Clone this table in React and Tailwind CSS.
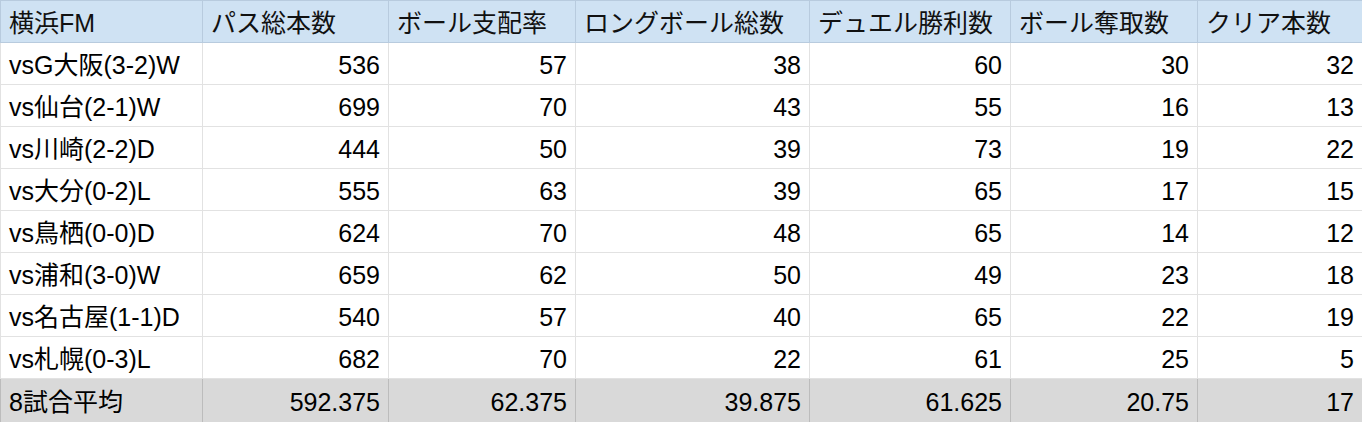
import React from 'react';

const headers = ['横浜FM', 'パス総本数', 'ボール支配率', 'ロングボール総数', 'デュエル勝利数', 'ボール奪取数', 'クリア本数'];
const widths = ['w-[202px]', 'w-[186px]', 'w-[187px]', 'w-[234px]', 'w-[201px]', 'w-[187px]', 'w-[165px]'];

const rows = [
    ['vsG大阪(3-2)W', 536, 57, 38, 60, 30, 32],
    ['vs仙台(2-1)W', 699, 70, 43, 55, 16, 13],
    ['vs川崎(2-2)D', 444, 50, 39, 73, 19, 22],
    ['vs大分(0-2)L', 555, 63, 39, 65, 17, 15],
    ['vs鳥栖(0-0)D', 624, 70, 48, 65, 14, 12],
    ['vs浦和(3-0)W', 659, 62, 50, 49, 23, 18],
    ['vs名古屋(1-1)D', 540, 57, 40, 65, 22, 19],
    ['vs札幌(0-3)L', 682, 70, 22, 61, 25, 5],
];

const average = ['8試合平均', '592.375', '62.375', '39.875', '61.625', '20.75', '17'];

const App = () => {
    return (
        <div className="w-[1362px] h-[422px] overflow-hidden bg-white text-black font-['Liberation_Sans','Noto_Sans_CJK_JP',sans-serif] text-[25px] leading-none">
            <table className="w-[1362px] table-fixed border-collapse">
                <colgroup>
                    {widths.map((w, i) => (
                        <col key={i} className={w} />
                    ))}
                </colgroup>
                <thead>
                    <tr className="bg-[#cfe2f3]">
                        {headers.map((h) => (
                            <th key={h} className="h-[42px] px-2 pt-[4px] pb-0 text-left font-normal text-[#111] border border-[#b8cbde] whitespace-nowrap">
                                {h}
                            </th>
                        ))}
                    </tr>
                </thead>
                <tbody>
                    {rows.map((row) => (
                        <tr key={row[0]}>
                            {row.map((cell, i) => (
                                <td
                                    key={i}
                                    className={`h-[42px] px-2 pt-[4px] pb-0 border border-[#e2e2e2] whitespace-nowrap ${i === 0 ? 'text-left' : 'text-right'}`}
                                >
                                    {cell}
                                </td>
                            ))}
                        </tr>
                    ))}
                    <tr className="bg-[#d9d9d9]">
                        {average.map((cell, i) => (
                            <td
                                key={i}
                                className={`h-[44px] px-2 pt-[4px] pb-0 border border-[#bcbcbc] whitespace-nowrap ${i === 0 ? 'text-left' : 'text-right'}`}
                            >
                                {cell}
                            </td>
                        ))}
                    </tr>
                </tbody>
            </table>
        </div>
    );
};

export default App;
